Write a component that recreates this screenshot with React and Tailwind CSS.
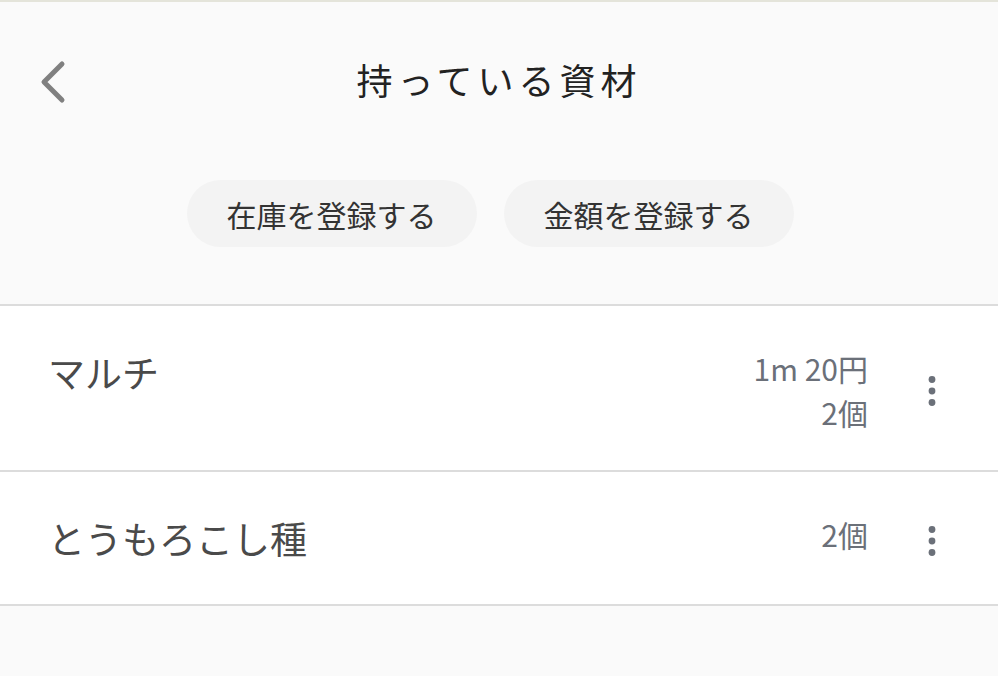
const items = [
  { name: 'マルチ', details: ['1m 20円', '2個'] },
  { name: 'とうもろこし種', details: ['2個'] },
];

function MoreDots() {
  return (
    <svg width="40" height="40" viewBox="0 0 40 40" className="shrink-0 text-[#6b7079]">
      <circle cx="20" cy="8.5" r="3.4" fill="currentColor" />
      <circle cx="20" cy="20" r="3.4" fill="currentColor" />
      <circle cx="20" cy="31.5" r="3.4" fill="currentColor" />
    </svg>
  );
}

export default function App() {
  return (
    <div
      className="min-h-[676px] bg-[#fafafa] border-t-2 border-[#e4e4da]"
      style={{ fontFamily: '"Noto Sans CJK JP", "Noto Sans", sans-serif' }}
    >
      {/* Header */}
      <div className="relative h-[154px] flex items-center justify-center">
        <button className="absolute left-[38px] top-[56px] text-[#808080]">
          <svg width="30" height="48" viewBox="0 0 30 48" fill="none">
            <path d="M24 6 L6 24 L24 42" stroke="currentColor" strokeWidth="5" strokeLinecap="round" strokeLinejoin="round" />
          </svg>
        </button>
        <h1 className="text-[36px] leading-none tracking-[5px] text-[#222]">持っている資材</h1>
      </div>

      {/* Actions */}
      <div className="flex justify-center gap-[27px] pt-6 pb-[57px] pr-[18px]">
        <button className="w-[290px] h-[67px] rounded-full bg-[#f3f3f3] text-[30px] leading-none text-[#333]">
          在庫を登録する
        </button>
        <button className="w-[290px] h-[67px] rounded-full bg-[#f3f3f3] text-[30px] leading-none text-[#333]">
          金額を登録する
        </button>
      </div>

      {/* List */}
      <ul className="border-t-2 border-[#dcdcdc] bg-white">
        {items.map((item) => (
          <li key={item.name} className="flex items-center py-[38px] pl-12 pr-[46px] border-b-2 border-[#dcdcdc]">
            <div className="self-start flex-1 text-[37px] leading-[56px] text-[#4a4a4a]">{item.name}</div>
            <div className="flex flex-col items-end self-start mt-[2px] -mb-[2px] text-[30px] leading-[44px] text-[#6b7079]">
              {item.details.map((d) => (
                <span key={d}>{d}</span>
              ))}
            </div>
            <div className="ml-[44px] mt-[6px]">
              <MoreDots />
            </div>
          </li>
        ))}
      </ul>
    </div>
  );
}
